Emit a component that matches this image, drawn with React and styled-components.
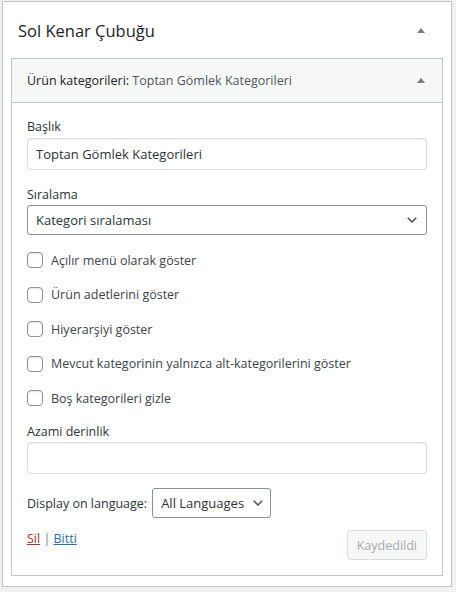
import React from "react";
import styled, { createGlobalStyle } from "styled-components";

const Global = createGlobalStyle`
  html, body { margin: 0; padding: 0; }
  body {
    background: #f0f0f1;
    font-family: "Open Sans", "Noto Sans", sans-serif;
    color: #3c434a;
    -webkit-font-smoothing: antialiased;
  }
  * { box-sizing: border-box; }
`;

const Sidebar = styled.section`
  margin: 1px 0 0 2px;
  width: 450px;
  background: #fff;
  border: 1px solid #c3c4c7;
  padding: 0 8px 10px;
`;

const SidebarHead = styled.div`
  display: flex;
  align-items: center;
  justify-content: space-between;
  height: 56px;
  padding: 1px 18px 0 7px;
`;

const SidebarTitle = styled.h2`
  margin: 0;
  font-size: 16.5px;
  font-weight: 400;
  color: #1d2327;
  line-height: 24px;
`;

const Caret = styled.svg`
  width: 8px;
  height: 5px;
  flex: none;
  fill: #787c82;
`;

const Widget = styled.div`
  border: 1px solid #c3c4c7;
  background: #fff;
`;

const WidgetTop = styled.div`
  display: flex;
  align-items: center;
  justify-content: space-between;
  height: 44px;
  padding: 0 17px 0 15px;
  background: #f6f7f7;
  border-bottom: 1px solid #c3c4c7;
`;

const WidgetTitle = styled.h3`
  margin: 0;
  font-size: 12.5px;
  font-weight: 400;
  line-height: 18px;
  color: #1d2327;
`;

const InTitle = styled.span`
  color: #50575e;
`;

const WidgetInside = styled.form`
  display: flex;
  flex-direction: column;
  padding: 15px;
`;

const Field = styled.div`
  display: flex;
  flex-direction: column;
  gap: ${(p) => p.$gap ?? 1}px;
  margin-top: ${(p) => p.$mt ?? 0}px;
`;

const Label = styled.label`
  font-size: 12.5px;
  line-height: 18px;
  color: #2c3338;
`;

const TextInput = styled.input`
  width: 100%;
  height: 32px;
  margin: 0;
  padding: 0 8px;
  border: 1px solid #dcdcde;
  border-radius: 3px;
  box-shadow: inset 0 1px 2px rgba(0, 0, 0, 0.07);
  background: #fff;
  font: inherit;
  font-size: 13px;
  color: #2c3338;
  outline: none;
`;

const SelectWrap = styled.div`
  position: relative;
  display: ${(p) => (p.$inline ? "inline-block" : "block")};
  width: ${(p) => (p.$inline ? "auto" : "100%")};
`;

const Select = styled.select`
  appearance: none;
  -webkit-appearance: none;
  width: 100%;
  height: 30px;
  margin: 0;
  padding: 0 ${(p) => p.$padRight}px 0 8px;
  border: 1px solid #8c8f94;
  border-radius: 3px;
  background: #fff;
  font: inherit;
  font-size: 13px;
  color: #2c3338;
  outline: none;
`;

const Chevron = styled.svg`
  position: absolute;
  top: 50%;
  right: ${(p) => p.$right}px;
  width: 10px;
  height: 6px;
  margin-top: -3px;
  fill: none;
  stroke: #50575e;
  stroke-width: 1.6;
  pointer-events: none;
`;

const CheckList = styled.div`
  display: flex;
  flex-direction: column;
  gap: 18.5px;
  margin-top: 17px;
`;

const CheckRow = styled.label`
  display: flex;
  align-items: center;
  gap: 8px;
  height: 16px;
  font-size: 12.5px;
  color: #3c434a;
`;

const Checkbox = styled.input.attrs({ type: "checkbox" })`
  appearance: none;
  -webkit-appearance: none;
  flex: none;
  width: 16px;
  height: 16px;
  margin: 0;
  border: 1px solid #8c8f94;
  border-radius: 4px;
  background: #fff;
  box-shadow: inset 0 1px 2px rgba(0, 0, 0, 0.1);
`;

const LangRow = styled.div`
  display: flex;
  align-items: center;
  gap: 5px;
  margin-top: 14px;
  font-size: 12.5px;
  color: #2c3338;
`;

const Actions = styled.div`
  display: flex;
  align-items: flex-start;
  justify-content: space-between;
  margin-top: 12px;
`;

const LinkLine = styled.div`
  font-size: 12.5px;
  line-height: 18px;
  color: #787c82;
`;

const ActionLink = styled.a`
  color: ${(p) => (p.$danger ? "#b32d2e" : "#2271b1")};
  text-decoration: underline;
  cursor: pointer;
`;

const SaveButton = styled.button`
  height: 30px;
  padding: 0 9px;
  border: 1px solid #dcdcde;
  border-radius: 3px;
  background: #f6f7f7;
  color: #a7aaad;
  font: inherit;
  font-size: 12.5px;
`;

const checks = [
  "Açılır menü olarak göster",
  "Ürün adetlerini göster",
  "Hiyerarşiyi göster",
  "Mevcut kategorinin yalnızca alt-kategorilerini göster",
  "Boş kategorileri gizle",
];

const UpCaret = () => (
  <Caret viewBox="0 0 8 5">
    <polygon points="4,0 8,5 0,5" />
  </Caret>
);

const DownChevron = ({ right }) => (
  <Chevron viewBox="0 0 10 6" $right={right}>
    <polyline points="0.8,0.8 5,5 9.2,0.8" />
  </Chevron>
);

export default function App() {
  return (
    <>
      <Global />
      <Sidebar>
        <SidebarHead>
          <SidebarTitle>Sol Kenar Çubuğu</SidebarTitle>
          <UpCaret />
        </SidebarHead>
        <Widget>
          <WidgetTop>
            <WidgetTitle>
              Ürün kategorileri: <InTitle>Toptan Gömlek Kategorileri</InTitle>
            </WidgetTitle>
            <UpCaret />
          </WidgetTop>
          <WidgetInside onSubmit={(e) => e.preventDefault()}>
            <Field $gap={2}>
              <Label>Başlık</Label>
              <TextInput defaultValue="Toptan Gömlek Kategorileri" />
            </Field>
            <Field $mt={16}>
              <Label>Sıralama</Label>
              <SelectWrap>
                <Select $padRight={30} defaultValue="order">
                  <option value="order">Kategori sıralaması</option>
                  <option value="name">İsim</option>
                </Select>
                <DownChevron right={10} />
              </SelectWrap>
            </Field>
            <CheckList>
              {checks.map((text) => (
                <CheckRow key={text}>
                  <Checkbox />
                  {text}
                </CheckRow>
              ))}
            </CheckList>
            <Field $mt={17}>
              <Label>Azami derinlik</Label>
              <TextInput defaultValue="" />
            </Field>
            <LangRow>
              Display on language:
              <SelectWrap $inline>
                <Select $padRight={26} defaultValue="all">
                  <option value="all">All Languages</option>
                </Select>
                <DownChevron right={8} />
              </SelectWrap>
            </LangRow>
            <Actions>
              <LinkLine>
                <ActionLink $danger>Sil</ActionLink> | <ActionLink>Bitti</ActionLink>
              </LinkLine>
              <SaveButton type="button" disabled>
                Kaydedildi
              </SaveButton>
            </Actions>
          </WidgetInside>
        </Widget>
      </Sidebar>
    </>
  );
}
